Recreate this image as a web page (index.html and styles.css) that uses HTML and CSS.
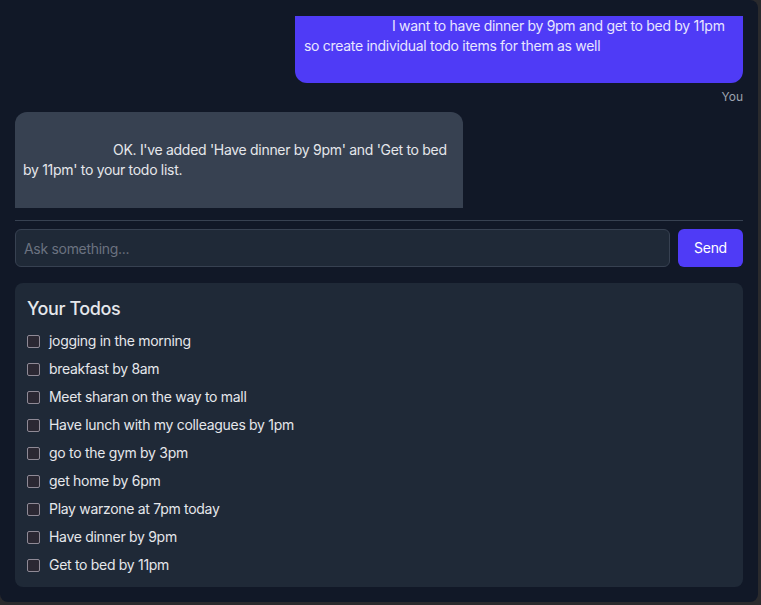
FILE: index.html
```html
<!DOCTYPE html>
<html lang="en">
<head>
<meta charset="utf-8">
<title>Todo Chat</title>
<link rel="stylesheet" href="styles.css">
</head>
<body>
<div class="app">
  <div class="chat">
    <div class="msg msg-user">
      <div class="bubble bubble-user">I want to have dinner by 9pm and get to bed by 11pm so create individual todo items for them as well</div>
      <div class="who">You</div>
    </div>
    <div class="msg msg-bot">
      <div class="bubble bubble-bot">OK. I've added 'Have dinner by 9pm' and 'Get to bed by 11pm' to your todo list.</div>
    </div>
  </div>
  <form class="ask">
    <input class="ask-input" type="text" placeholder="Ask something...">
    <button class="ask-send" type="button">Send</button>
  </form>
  <section class="todos">
    <h2 class="todos-title">Your Todos</h2>
    <ul class="todo-list">
      <li class="todo"><span class="box"></span>jogging in the morning</li>
      <li class="todo"><span class="box"></span>breakfast by 8am</li>
      <li class="todo"><span class="box"></span>Meet sharan on the way to mall</li>
      <li class="todo"><span class="box"></span>Have lunch with my colleagues by 1pm</li>
      <li class="todo"><span class="box"></span>go to the gym by 3pm</li>
      <li class="todo"><span class="box"></span>get home by 6pm</li>
      <li class="todo"><span class="box"></span>Play warzone at 7pm today</li>
      <li class="todo"><span class="box"></span>Have dinner by 9pm</li>
      <li class="todo"><span class="box"></span>Get to bed by 11pm</li>
    </ul>
  </section>
</div>
</body>
</html>
```

FILE: styles.css
```css
* { box-sizing: border-box; }
html, body {
  margin: 0;
  padding: 0;
  background: #2a2a2d;
  width: 761px;
  height: 605px;
  overflow: hidden;
}
body {
  font-family: Inter, "Noto Sans", sans-serif;
  font-size: 14px;
  line-height: 20px;
  letter-spacing: -0.3px;
  color: #e5e7eb;
}
.app {
  width: 758px;
  height: 602px;
  background: #111827;
  border-radius: 0 8px 8px 8px;
  padding: 16px 15px 15px 15px;
  display: flex;
  flex-direction: column;
}
.chat {
  height: 192px;
  overflow: hidden;
  display: flex;
  flex-direction: column;
}
.msg { display: flex; flex-direction: column; }
.msg-user { align-items: flex-end; }
.msg-bot { align-items: flex-start; margin-top: 7px; }
.bubble {
  width: 448px;
  padding: 0 10px 0 9px;
}
.bubble-user {
  background: #4f3bf6;
  color: #e8e6ff;
  border-radius: 0 0 12px 12px;
  text-indent: 88px;
  height: 67px;
}
.bubble-bot {
  background: #374151;
  border-radius: 12px 12px 0 0;
  text-indent: 90px;
  padding: 28px 10px 0 8px;
  height: 96px;
}
.who {
  font-size: 12px;
  line-height: 16px;
  color: #9ca3af;
  margin-top: 6px;
  letter-spacing: 0;
}
.ask {
  margin: 12px 0 0 0;
  border-top: 1px solid #374151;
  padding-top: 8px;
  display: flex;
  gap: 8px;
}
.ask-input {
  flex: 1;
  height: 38px;
  background: #1f2937;
  border: 1px solid #374151;
  border-radius: 6px;
  padding: 0 8px;
  font: inherit;
  letter-spacing: inherit;
  color: #e5e7eb;
  outline: none;
}
.ask-input::placeholder { color: #6b7280; }
.ask-send {
  width: 65px;
  height: 38px;
  background: #4f3bf6;
  color: #ffffff;
  border: none;
  border-radius: 6px;
  font: inherit;
  letter-spacing: inherit;
}
.todos {
  margin-top: 16px;
  background: #1f2937;
  border-radius: 8px;
  padding: 14px 12px 12px 12px;
  height: 304px;
}
.todos-title {
  margin: 0 0 10px 0;
  font-size: 18px;
  line-height: 24px;
  font-weight: 500;
  letter-spacing: -0.4px;
  color: #e5e7eb;
}
.todo-list {
  list-style: none;
  margin: 0;
  padding: 0;
  display: flex;
  flex-direction: column;
  gap: 8px;
}
.todo {
  display: flex;
  align-items: center;
  gap: 9px;
  height: 20px;
}
.box {
  width: 13px;
  height: 13px;
  border: 1px solid #8f8a96;
  border-radius: 2px;
  background: #2b2833;
  flex: none;
}
```
